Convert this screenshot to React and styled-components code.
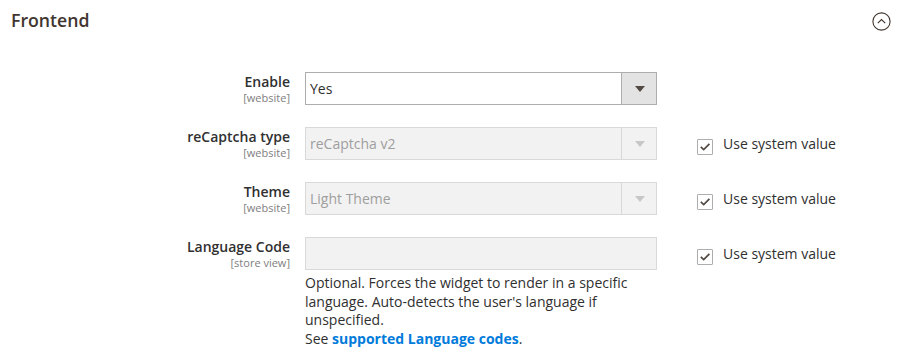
import React from "react";
import styled, { createGlobalStyle } from "styled-components";

const Global = createGlobalStyle`
  html, body { margin: 0; padding: 0; background: #fff; }
  body { font-family: "Open Sans", "Liberation Sans", sans-serif; color: #303030; }
  * { box-sizing: border-box; }
`;

const Section = styled.section`
  width: 913px;
  height: 358px;
  overflow: hidden;
`;

const Header = styled.div`
  display: flex;
  align-items: center;
  justify-content: space-between;
  height: 42px;
  padding: 0 22px 0 11px;
`;

const Title = styled.h2`
  margin: 0;
  font-size: 17.7px;
  font-weight: 600;
  color: #41362f;
  line-height: 22px;
  padding-bottom: 2px;
`;

const Toggle = styled.svg`
  display: block;
  width: 19px;
  height: 19px;
`;

const Form = styled.div`
  padding-top: 30px;
  display: flex;
  flex-direction: column;
  gap: 22px;
`;

const Row = styled.div`
  display: grid;
  grid-template-columns: 290px 352px auto;
  column-gap: 15px;
`;

const LabelCell = styled.div`
  text-align: right;
  display: flex;
  flex-direction: column;
  align-items: flex-end;
`;

const LabelText = styled.span`
  font-size: 14px;
  font-weight: 600;
  line-height: 19px;
  color: #303030;
`;

const Scope = styled.span`
  font-size: 11px;
  line-height: 13px;
  color: #808080;
`;

const Control = styled.div`
  display: flex;
  flex-direction: column;
`;

const Select = styled.div`
  display: flex;
  height: 33px;
  border: 1px solid ${(p) => (p.$disabled ? "#d9d9d9" : "#adadad")};
  background: ${(p) => (p.$disabled ? "#f2f2f2" : "#fff")};
`;

const SelectValue = styled.span`
  flex: 1;
  padding-left: 4px;
  font-size: 14px;
  line-height: 31px;
  color: ${(p) => (p.$disabled ? "#9e9e9e" : "#303030")};
`;

const SelectButton = styled.span`
  width: 35px;
  border-left: 1px solid ${(p) => (p.$disabled ? "#d9d9d9" : "#adadad")};
  background: ${(p) => (p.$disabled ? "#f2f2f2" : "#e3e3e3")};
  display: flex;
  align-items: center;
  justify-content: center;
`;

const Arrow = styled.span`
  width: 0;
  height: 0;
  border-left: 5px solid transparent;
  border-right: 5px solid transparent;
  border-top: 6px solid ${(p) => (p.$disabled ? "#c7c7c7" : "#514943")};
  margin-left: 1px;
`;

const TextInput = styled.div`
  height: 33px;
  border: 1px solid #d9d9d9;
  background: #f2f2f2;
`;

const Note = styled.div`
  margin-top: 4px;
  font-size: 14px;
  line-height: 18.5px;
  color: #303030;
`;

const Link = styled.a`
  color: #007bdb;
  font-weight: 700;
  text-decoration: none;
`;

const UseSystem = styled.label`
  display: flex;
  align-items: flex-start;
  gap: 10px;
  padding-top: 7px;
  padding-left: 25px;
  font-size: 14px;
  line-height: 19px;
  color: #303030;
`;

const Box = styled.span`
  width: 16px;
  height: 16px;
  margin-top: 5px;
  border: 1px solid #adadad;
  border-radius: 1px;
  background: #fff;
  display: flex;
  align-items: center;
  justify-content: center;
`;

function Check() {
  return (
    <Box>
      <svg width="12" height="10" viewBox="0 0 12 10">
        <path d="M1.8 4.8 L4.7 7.6 L10.4 1.8" fill="none" stroke="#514943" strokeWidth="1.7" />
      </svg>
    </Box>
  );
}

function Field({ label, scope, children, system }) {
  return (
    <Row>
      <LabelCell>
        <LabelText>{label}</LabelText>
        <Scope>{scope}</Scope>
      </LabelCell>
      <Control>{children}</Control>
      {system ? (
        <UseSystem>
          <Check />
          Use system value
        </UseSystem>
      ) : (
        <span />
      )}
    </Row>
  );
}

function SelectBox({ value, disabled }) {
  return (
    <Select $disabled={disabled}>
      <SelectValue $disabled={disabled}>{value}</SelectValue>
      <SelectButton $disabled={disabled}>
        <Arrow $disabled={disabled} />
      </SelectButton>
    </Select>
  );
}

export default function App() {
  return (
    <Section>
      <Global />
      <Header>
        <Title>Frontend</Title>
        <Toggle viewBox="0 0 19 19">
          <circle cx="9.5" cy="9.5" r="8.6" fill="none" stroke="#41362f" strokeWidth="1.1" />
          <path d="M5.8 11.2 L9.5 7.6 L13.2 11.2" fill="none" stroke="#41362f" strokeWidth="1.1" />
        </Toggle>
      </Header>
      <Form>
        <Field label="Enable" scope="[website]">
          <SelectBox value="Yes" />
        </Field>
        <Field label="reCaptcha type" scope="[website]" system>
          <SelectBox value="reCaptcha v2" disabled />
        </Field>
        <Field label="Theme" scope="[website]" system>
          <SelectBox value="Light Theme" disabled />
        </Field>
        <Field label="Language Code" scope="[store view]" system>
          <TextInput />
          <Note>
            Optional. Forces the widget to render in a specific language. Auto-detects the user's language if
            unspecified.
            <br />
            See <Link href="#">supported Language codes</Link>.
          </Note>
        </Field>
      </Form>
    </Section>
  );
}
